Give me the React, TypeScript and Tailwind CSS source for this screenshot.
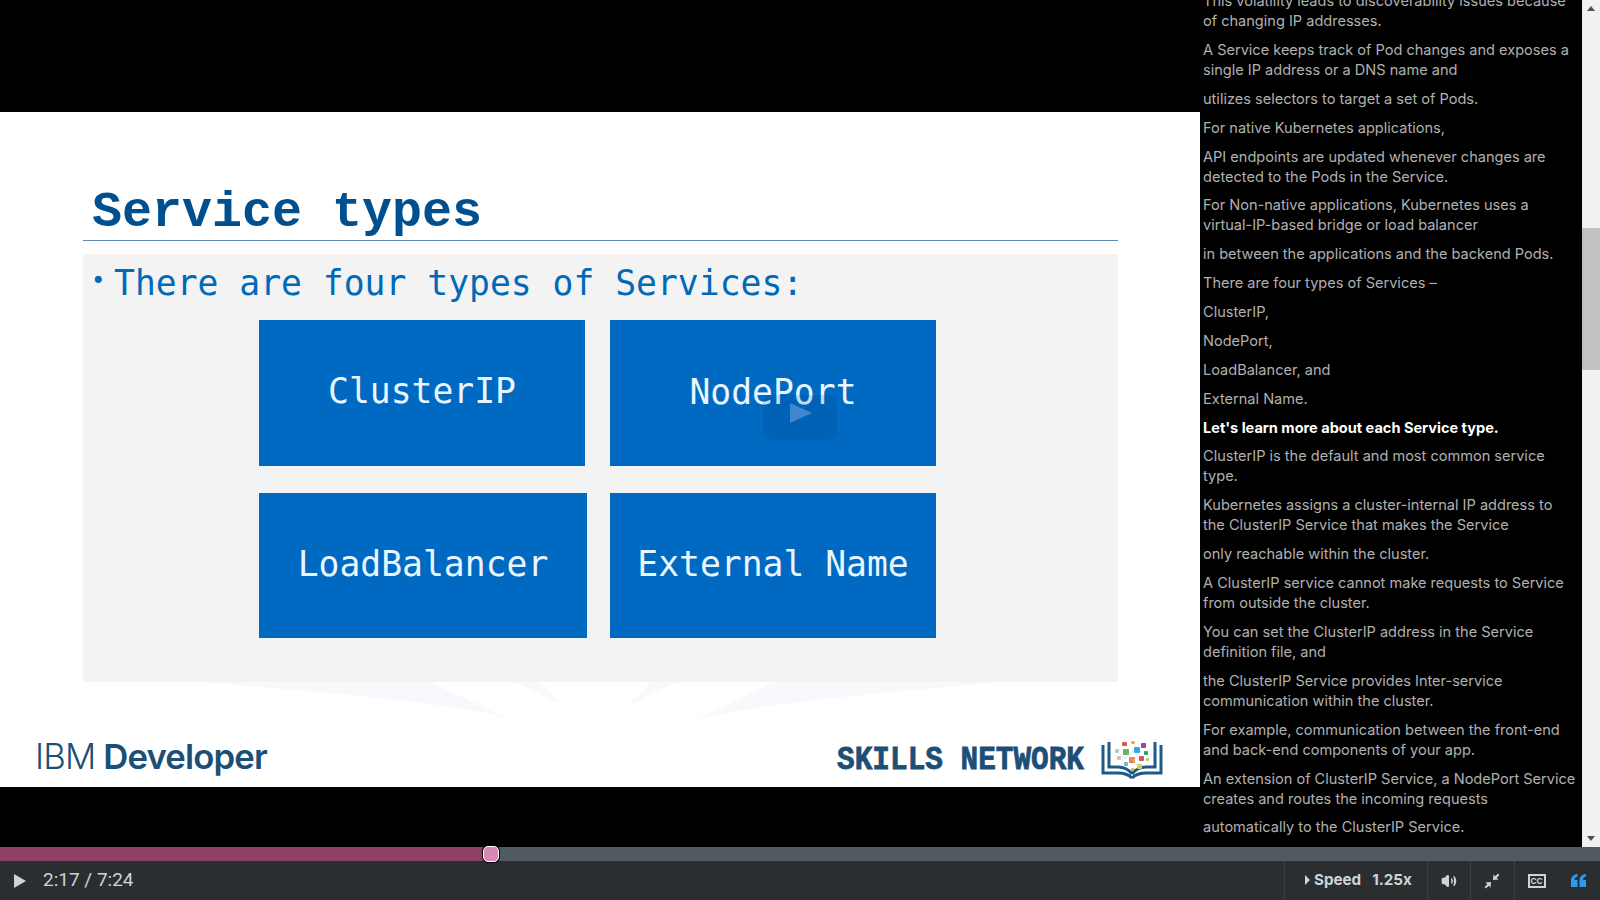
import { Volume2 } from 'lucide-react';

const transcript = [
  'This volatility leads to discoverability issues because of changing IP addresses.',
  'A Service keeps track of Pod changes and exposes a single IP address or a DNS name and',
  'utilizes selectors to target a set of Pods.',
  'For native Kubernetes applications,',
  'API endpoints are updated whenever changes are detected to the Pods in the Service.',
  'For Non-native applications, Kubernetes uses a virtual-IP-based bridge or load balancer',
  'in between the applications and the backend Pods.',
  'There are four types of Services –',
  'ClusterIP,',
  'NodePort,',
  'LoadBalancer, and',
  'External Name.',
  "Let's learn more about each Service type.",
  'ClusterIP is the default and most common service type.',
  'Kubernetes assigns a cluster-internal IP address to the ClusterIP Service that makes the Service',
  'only reachable within the cluster.',
  'A ClusterIP service cannot make requests to Service from outside the cluster.',
  'You can set the ClusterIP address in the Service definition file, and',
  'the ClusterIP Service provides Inter-service communication within the cluster.',
  'For example, communication between the front-end and back-end components of your app.',
  'An extension of ClusterIP Service, a NodePort Service creates and routes the incoming requests',
  'automatically to the ClusterIP Service.',
];

function SkillsLogo() {
  return (
    <svg width="62" height="38" viewBox="0 0 62 38" className="ml-[17px]">
      <path d="M2 4v28h15c5 0 10 1 14 5" fill="none" stroke="#1e5a86" strokeWidth="3" />
      <path d="M8 1v25h9c6 0 11 3 14 7" fill="none" stroke="#1e5a86" strokeWidth="3" />
      <path d="M60 4v28H45c-5 0-10 1-14 5" fill="none" stroke="#1e5a86" strokeWidth="3" />
      <path d="M54 1v25h-9c-6 0-11 3-14 7" fill="none" stroke="#1e5a86" strokeWidth="3" />
      <rect x="21" y="1" width="5" height="4" rx="1" fill="#e2574c" />
      <rect x="30" y="0" width="4" height="3" rx="1" fill="#f0a848" />
      <rect x="40" y="2" width="5" height="5" rx="1" fill="#8c4aa8" />
      <rect x="14" y="8" width="4" height="4" rx="1" fill="#9fd4b8" />
      <rect x="22" y="8" width="6" height="6" rx="1" fill="#5fb85f" />
      <rect x="33" y="6" width="6" height="6" rx="1" fill="#35a8dc" />
      <rect x="43" y="10" width="4" height="4" rx="1" fill="#2f9e6e" />
      <rect x="16" y="15" width="4" height="4" rx="1" fill="#f0b0b8" />
      <rect x="28" y="16" width="6" height="6" rx="1" fill="#ef7d3c" />
      <rect x="38" y="15" width="5" height="5" rx="1" fill="#d94f70" />
      <rect x="45" y="17" width="3" height="3" rx="1" fill="#a8d060" />
      <rect x="23" y="21" width="4" height="4" rx="1" fill="#6ab7e0" />
      <rect x="36" y="23" width="5" height="5" rx="1" fill="#d8d050" />
      <rect x="30" y="27" width="3" height="3" rx="1" fill="#f0a848" />
      <path d="M18 12l6 6 8-8M26 12l10 12M40 10l-8 10" fill="none" stroke="#bfd8e8" strokeWidth="0.6" />
    </svg>
  );
}

function ServiceBox({ label, className }: { label: string; className: string }) {
  return (
    <div className={`flex items-center justify-center bg-[#0069c2] text-[34.7px] text-[#eaf6ff] ${className}`}>
      {label}
    </div>
  );
}

export default function App() {
  return (
    <div className="flex h-[900px] w-[1600px] flex-col overflow-hidden bg-black font-['Inter',sans-serif]">
      <div className="flex h-[847px]">
        <div className="w-[1200px] pt-[112px]">
          <div className="relative h-[675px] bg-white pt-[74px]">
            {/* faint watermark left over under the grey panel */}
            <svg className="absolute top-[570px] left-[200px]" width="810" height="45" viewBox="0 0 810 45">
              <path d="M5 0H229L313 38C260 20 110 10 5 0zM314 0h26l22 23zM477 0h-26l-22 23zM574 0H798C700 10 560 20 495 38z" fill="#f9f9fd" />
            </svg>
            <div className="relative ml-[83px] w-[1035px] font-['DejaVu_Sans_Mono',monospace]">
              <h1 className="h-[54px] pt-[2px] pl-[9px] font-['Liberation_Mono',monospace] text-[50px] leading-[50px] font-bold text-[#00508f]">Service types</h1>
              <div className="h-px bg-[#5f8cb5]" />
              <div className="mt-[13px] h-[428px] bg-[#f3f3f4] pt-[8px]">
                <p className="flex h-[58px] items-start text-[34.7px] leading-[42px] text-[#0069b8]">
                  <span className="w-[31px] pl-[8px] text-[24px] leading-[38px]">•</span>
                  There are four types of Services:
                </p>
                <div className="ml-[176px] grid w-[677px] grid-cols-[328px_326px] grid-rows-[146px_145px] gap-x-[23px] gap-y-[27px]">
                  <ServiceBox label="ClusterIP" className="mr-[2px] pb-[4px]" />
                  <ServiceBox label="NodePort" className="pb-[2px]" />
                  <ServiceBox label="LoadBalancer" className="pb-[2px]" />
                  <ServiceBox label="External Name" className="pb-[2px]" />
                </div>
              </div>
            </div>
            <div className="relative mt-[53px] flex items-start justify-between pr-[37px] pl-[35px]">
              <span className="text-[34.7px] leading-[42px] font-semibold tracking-[-0.85px] text-[#1c4f75]">
                <span className="font-light">IBM</span> Developer
              </span>
              <div className="mt-[5px] flex items-center">
                <span className="mt-[2px] origin-center scale-y-[1.15] font-['Liberation_Mono',monospace] text-[29.4px] leading-[38px] font-bold text-[#1c4f75] [-webkit-text-stroke:0.7px_#1c4f75]">
                  SKILLS NETWORK
                </span>
                <SkillsLogo />
              </div>
            </div>
            {/* faint play button over the frame */}
            <div className="absolute top-[283px] left-[763px] flex h-[45px] w-[74px] items-center justify-center rounded-lg bg-[#003f7a]/15 pb-[9px]">
              <svg width="22" height="20" viewBox="0 0 22 20" className="ml-[2px]">
                <path d="M0 0l22 10L0 20z" fill="#3f86cb" />
              </svg>
            </div>
          </div>
        </div>
        <div className="w-[382px] overflow-hidden bg-black pr-[5px] pl-[3px] text-[14.55px] leading-5 text-[#b0b0b0]">
          <div className="-mt-[9px] flex flex-col gap-[8.88px]">
            {transcript.map((line) => (
              <p key={line} className={line.startsWith("Let's") ? 'font-bold text-white' : ''}>
                {line}
              </p>
            ))}
          </div>
        </div>
        <div className="relative w-[18px] bg-[#f1f1f1]">
          <div className="absolute top-[228px] h-[142px] w-full bg-[#c1c1c1]" />
          <div className="absolute top-[6px] left-[5px] h-0 w-0 border-x-4 border-b-[5px] border-x-transparent border-b-[#505050]" />
          <div className="absolute bottom-[6px] left-[5px] h-0 w-0 border-x-4 border-t-[5px] border-x-transparent border-t-[#505050]" />
        </div>
      </div>
      <div className="relative flex h-[14px] bg-[#4f5b60]">
        <div className="w-[491px] bg-[#8f4066]" />
        <div className="absolute -top-px left-[483px] h-[16px] w-[16px] rounded-[5px] border border-white bg-[#d987b4] ring-1 ring-black" />
      </div>
      <div className="flex flex-1 items-center bg-[#2a2e30] text-[#ccd4d9]">
        <div className="flex w-[1284px] items-center">
          <span className="ml-[14px] h-0 w-0 border-y-[7px] border-l-[12px] border-y-transparent border-l-[#ccd4d9]" />
          <span className="ml-[17px] font-['Roboto',sans-serif] text-[19px]">2:17 / 7:24</span>
        </div>
        <div className="flex h-full w-[316px] items-center border-l border-dotted border-[#4a5054] text-[15.2px] font-bold">
          <div className="flex w-[142px] items-center pl-[20px]">
            <span className="mr-[4px] h-0 w-0 border-y-[5px] border-l-[5px] border-y-transparent border-l-[#ccd4d9]" />
            Speed
            <span className="ml-[11px]">1.25x</span>
          </div>
          <div className="flex h-full w-[43px] items-center justify-center border-l border-dotted border-[#4a5054]">
            <Volume2 size={16} fill="#ccd4d9" />
          </div>
          <div className="flex h-full w-[44px] items-center justify-center border-l border-dotted border-[#4a5054]">
            <svg width="16" height="16" viewBox="0 0 16 16" fill="#ccd4d9" className="-ml-[2px]">
              <path d="M9 7l.5-5.500 1.800 1.800L14 .6l1.400 1.400-2.700 2.700 1.800 1.800zM7 9l-.5 5.500-1.800-1.800L2 15.400.6 14l2.700-2.700-1.800-1.800z" />
            </svg>
          </div>
          <div className="flex h-full w-[44px] items-center justify-center border-l border-dotted border-[#4a5054]">
            <span className="flex h-[14px] w-[18px] items-center justify-center border-2 border-[#ccd4d9] text-[8px] leading-none">CC</span>
          </div>
          <div className="flex flex-1 items-center justify-center pr-[2px]">
            <svg width="15" height="13" viewBox="0 0 15 13" fill="#2c9be8">
              <path d="M0 13V7c0-4 2-6.500 6.500-7v2.500C4.500 3 3.500 4 3.500 6h3v7zM8.500 13V7c0-4 2-6.500 6.500-7v2.500C13 3 12 4 12 6h3v7z" />
            </svg>
          </div>
        </div>
      </div>
    </div>
  );
}
